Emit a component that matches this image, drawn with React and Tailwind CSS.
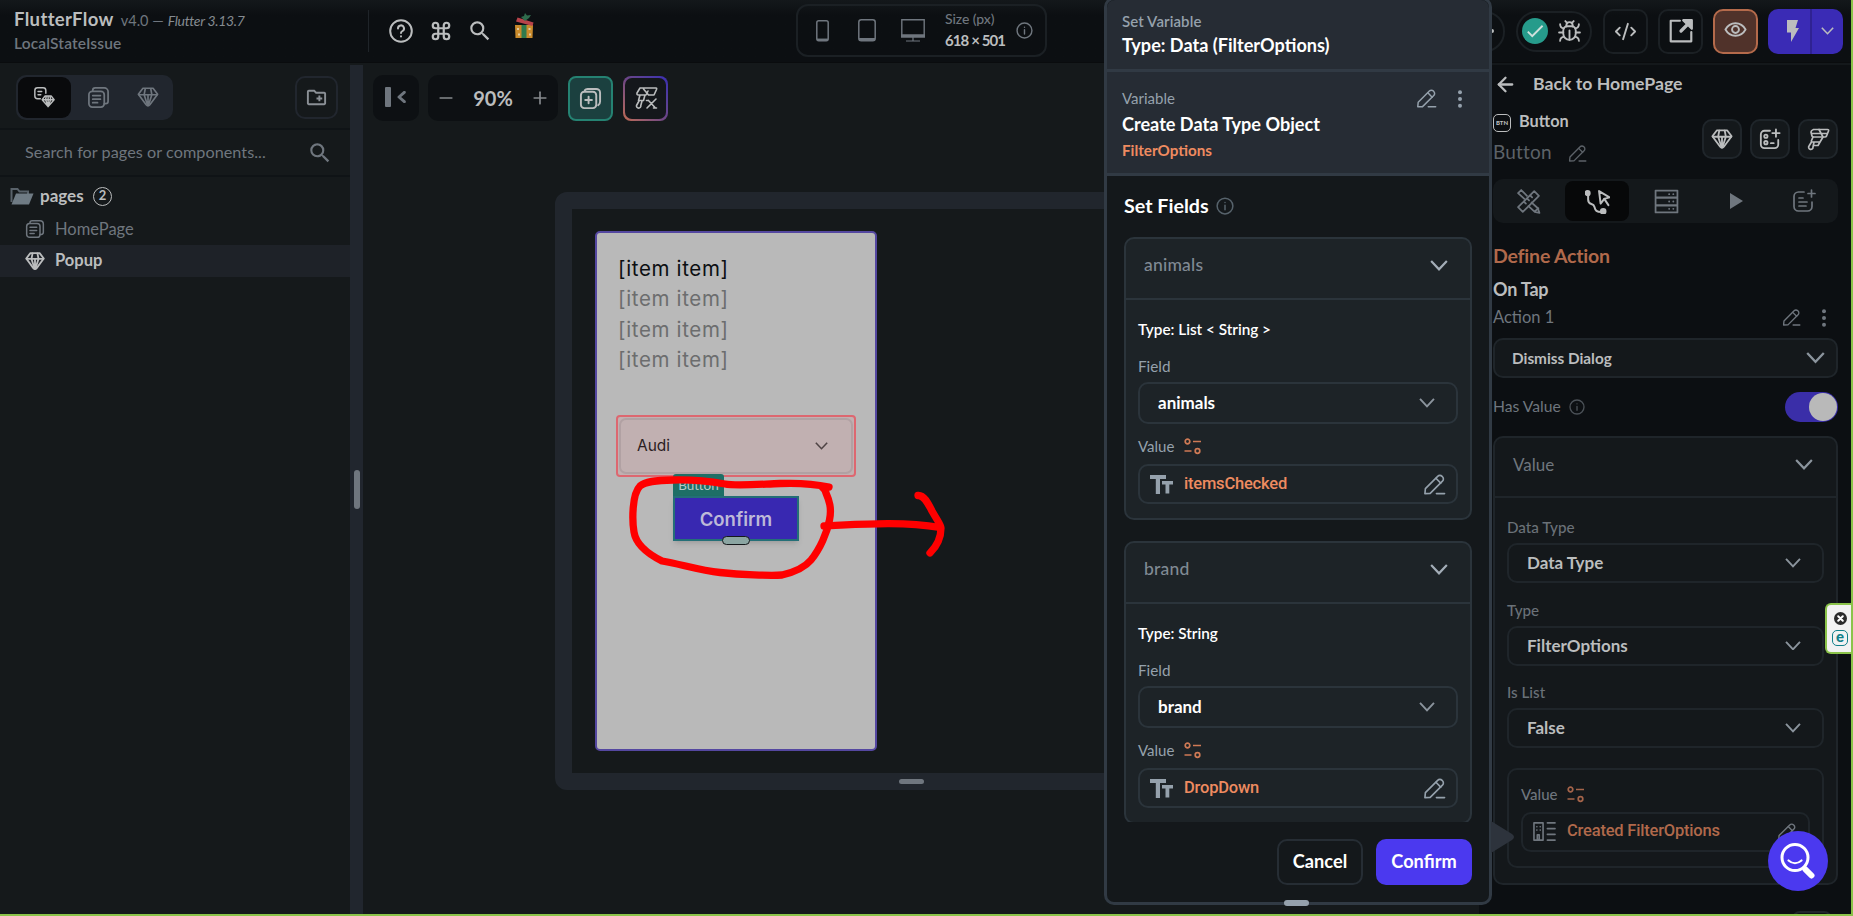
import React from "react";
import { Command, ArrowLeft, Plus, Minus, CodeXml, Bug } from "lucide-react";
import { MdOutlineCreateNewFolder, MdCheck, MdSearch } from "react-icons/md";

const Svg = ({ size = 24, className = "", children, sw = 1.8, box = 24 }) => (
  <svg
    width={size}
    height={size}
    viewBox={`0 0 ${box} ${box}`}
    fill="none"
    stroke="currentColor"
    strokeWidth={sw}
    strokeLinecap="round"
    strokeLinejoin="round"
    className={`shrink-0 ${className}`}
  >
    {children}
  </svg>
);

const Diamond = ({ size = 22, className, sw = 1.8 }) => (
  <Svg size={size} className={className} sw={sw}>
    <path d="M6.5 2.5h11L22.500 9 14 20.500q-2 2.500-4 0L1.500 9z" />
    <path d="M2 9.500h20M9 3L7.800 9.500 11.500 21M15 3l1.200 6.500L12.500 21M12 9.500V21" />
  </Svg>
);

const Pages = ({ size = 22, className }) => (
  <Svg size={size} className={className}>
    <rect x="2" y="5.5" width="16" height="16.5" rx="3.5" />
    <path d="M6 5V4.5A2.5 2.5 0 0 1 8.5 2H18a4 4 0 0 1 4 4v10a2.5 2.5 0 0 1-2.5 2.5H18" />
    <path d="M6 10h8M6 13.7h8M6 17.4h5" />
  </Svg>
);

const PagesDiamond = () => (
  <Svg size={22} sw={1.6}>
    <path d="M8 14H5a3 3 0 0 1-3-3V5a3 3 0 0 1 3-3h6a3 3 0 0 1 3 3v3" />
    <path d="M5.5 6h4M5.5 9.5h3" />
    <path d="M13 11h7l3 4-6.5 7.5L10 15zM10 15h13M14.5 11l-.8 4 2.8 7 2.8-7-.8-4M16.5 11v11" />
  </Svg>
);

const Pencil = ({ size = 22, className }) => (
  <Svg size={size} className={className} sw={1.7}>
    <path d="M2 21.500l.5-5.200L15.300 3.500a3.200 3.200 0 0 1 4.600 0l.4.400a3.200 3.200 0 0 1 0 4.600L7.500 21.300z" />
    <path d="M13.500 5.500l5 5M14 21.500H22.500" />
  </Svg>
);

const Info = ({ size = 18, className }) => (
  <Svg size={size} className={className} sw={2}>
    <circle cx="12" cy="12" r="10.5" />
    <path d="M12 11v6M12 7.2v.1" />
  </Svg>
);

const Dots = ({ className = "" }) => (
  <svg width="6" height="18" viewBox="0 0 6 18" fill="currentColor" className={`shrink-0 ${className}`}>
    <circle cx="3" cy="2.3" r="2" />
    <circle cx="3" cy="9" r="2" />
    <circle cx="3" cy="15.7" r="2" />
  </svg>
);

const Chevron = ({ w = 18, className = "" }) => (
  <svg
    width={w}
    height={w * 0.6}
    viewBox="0 0 18 11"
    fill="none"
    stroke="currentColor"
    strokeWidth="2.2"
    className={`shrink-0 ${className}`}
  >
    <path d="M1 1l8 8.5L17 1" />
  </svg>
);

const Sliders = ({ className }) => (
  <svg width="18" height="17" viewBox="0 0 18 17" fill="none" stroke="currentColor" strokeWidth="1.7" className={className}>
    <circle cx="3.5" cy="3.5" r="2.3" />
    <path d="M9 3.5h8M.5 13h7" />
    <circle cx="13.5" cy="13" r="2.3" />
  </svg>
);

const TextType = () => (
  <svg width="23" height="19" viewBox="0 0 23 19" fill="currentColor" className="text-[#95a1ac] shrink-0">
    <path d="M0 0h16v4H10v15H5.8V4H0z" />
    <path d="M12 6h11v3.6h-3.7V18.5h-3.8V9.6H12z" />
  </svg>
);

const Roller = ({ size = 24 }) => (
  <Svg size={size} sw={1.7}>
    <path d="M7.500 2.500h14q1.500 0 1 1.500l-2 5q-.5 1-1.500 1H7.500q-1 0-1.500-1L5 5q0-1.500 2.500-2.500z" />
    <path d="M13 2.500l4 7.500-3 5H6.500q-1.500 0-1-1.500L7 10M6 6.500h15M5.500 15l-2.500 4a2.200 2.200 0 1 0 4 1l1-5M8 18.500h4l2-3.500" />
  </Svg>
);

const Gift = () => (
  <svg width="22" height="27" viewBox="0 0 22 27" className="shrink-0">
    <path d="M2 12h18l-.5 13H2.500z" fill="#c98a2b" />
    <path d="M8.500 12h5v13h-5z" fill="#2f7a4c" />
    <path d="M4.500 4.500l16 5-1 3.500L3 8.500z" fill="#b8434a" />
    <path d="M12 8L8 4l3-1 1-3 2 2.500 4-.5-2 3z" fill="#2f6b4c" />
    <path d="M4 15h2v2H4zM5 20.500h2v2H5zM15.500 15h2v2h-2zM16 20.500h2v2h-2z" fill="#e0c9a0" />
  </svg>
);

const IconBox = ({ className = "", children }) => (
  <div className={`flex items-center justify-center shrink-0 ${className}`}>{children}</div>
);

const Header = () => (
  <header className="flex h-[63px] shrink-0 bg-gradient-to-b from-[#14181b] via-[#0c0f12] via-25% to-[#0c0f12] border-b border-[#0a0c0e]">
    <div className="w-[369px] shrink-0 pl-[14px] pt-[7px]">
      <div className="flex items-baseline h-[24px] leading-[24px] whitespace-nowrap text-[#6f767e]">
        <span className="text-[18.5px] font-bold text-[#bbbdbe] tracking-[0.35px]">FlutterFlow</span>
        <span className="text-[14.5px] ml-[7px]">v4.0 —</span>
        <span className="text-[14px] italic ml-[4px] tracking-[-0.3px] text-[#858b91]">Flutter 3.13.7</span>
      </div>
      <div className="text-[15.5px] font-semibold leading-[24px] tracking-[0.15px] text-[#6f767e]">LocalStateIssue</div>
    </div>
    <div className="w-px h-[42px] mt-[10px] -ml-px bg-[#1f2429]" />
    <div className="flex items-center h-[62px] pl-[20px] w-[427px] shrink-0 text-[#bbbdbe]">
      <Svg size={24} sw={2}>
        <circle cx="12" cy="12" r="10.8" />
        <path d="M9 9.500a3 3 0 1 1 4.500 2.500c-1 .6-1.500 1-1.500 2M12 17.300v.1" />
      </Svg>
      <Command size={22} strokeWidth={2.4} className="ml-[17px]" />
      <MdSearch size={26} className="ml-[15px]" />
      <div className="ml-[20px] -mt-[9px]"><Gift /></div>
    </div>
    <div className="flex items-center w-[251px] h-[53px] mt-[4px] shrink-0 rounded-[12px] border-2 border-[#1b2024] pl-[18px] text-[#6f767e]">
      <svg width="13" height="22" viewBox="0 0 13 22" fill="none" stroke="currentColor" strokeWidth="1.5">
        <rect x=".8" y=".8" width="11.4" height="20" rx="2" />
        <path d="M1 19.8h11" strokeWidth="2.5" />
      </svg>
      <svg width="18" height="23" viewBox="0 0 18 23" fill="none" stroke="currentColor" strokeWidth="1.5" className="ml-[29px]">
        <rect x=".8" y=".8" width="16.4" height="21" rx="2.5" />
        <path d="M1 20.5h16" strokeWidth="3" />
      </svg>
      <svg width="24" height="23" viewBox="0 0 24 23" fill="none" stroke="currentColor" strokeWidth="1.4" className="ml-[25px]">
        <path d="M.8 16V.8h22.400V16" />
        <path d="M0 17h24" strokeWidth="3.5" />
        <path d="M12 18v3.500M5 22h14" strokeWidth="1.2" />
      </svg>
      <div className="ml-[20px] w-[64px] whitespace-nowrap">
        <div className="text-[14px] leading-[20px] font-medium tracking-[-0.1px]">Size (px)</div>
        <div className="text-[15px] leading-[23px] font-bold tracking-[-0.9px] text-[#bbbdbe]">618 × 501</div>
      </div>
      <Info size={17} className="ml-[7px]" />
    </div>
    <div className="flex ml-auto h-[62px] items-center text-[#bbbdbe] pr-[8px] shrink-0">
      <div className="w-[40px] h-[41px] rounded-full border-2 border-[#1b2024] flex items-center justify-end pr-[9px]">
        <span className="size-[4px] rounded-full bg-[#bbbdbe]" />
      </div>
      <div className="ml-[11px] w-[76px] h-[41px] rounded-full border-2 border-[#1b2024] flex items-center pl-[4px]">
        <IconBox className="size-[26px] rounded-full bg-[#269b8b] text-[#cfe0dc]"><MdCheck size={22} /></IconBox>
        <Bug size={25} strokeWidth={1.8} className="ml-[9px]" />
      </div>
      <IconBox className="ml-[11px] size-[45px] rounded-[10px] border-2 border-[#1b2024]"><CodeXml size={23} /></IconBox>
      <IconBox className="ml-[10px] size-[45px] rounded-[10px] border-2 border-[#1b2024]">
        <Svg size={26} sw={2}>
          <path d="M11 2.500H2.500v19h19V13" />
          <path d="M12 12l6-6" strokeWidth="3" />
          <path d="M14 2h8v8z" fill="currentColor" />
        </Svg>
      </IconBox>
      <IconBox className="ml-[10px] size-[45px] rounded-[10px] border-2 border-[#b46a4b] bg-[#50322a] pb-[3px]">
        <Svg size={23} sw={2}>
          <path d="M1.500 12C4 7.500 8 5.500 12 5.500S20 7.500 22.500 12C20 16.500 16 18.500 12 18.500S4 16.500 1.500 12z" />
          <circle cx="12" cy="12" r="3.6" />
        </Svg>
      </IconBox>
      <div className="ml-[10px] w-[75px] h-[45px] rounded-[10px] bg-[#3a2bb5] flex items-center">
        <IconBox className="w-[44px] h-full border-r-2 border-[#2f2292]">
          <svg width="14" height="22" viewBox="0 0 14 22" fill="currentColor" className="ml-[7px]">
            <path d="M1 0h11L9.500 8H13L5 22v-9.500H1z" />
          </svg>
        </IconBox>
        <IconBox className="w-[31px]"><Chevron w={13} /></IconBox>
      </div>
    </div>
  </header>
);

const Sidebar = () => (
  <aside className="flex flex-col w-[350px] shrink-0 text-[#6f767e]">
    <div className="flex items-center justify-between h-[67px] pl-[16px] pr-[12px] pt-[3px] border-b-2 border-[#0f1316]">
      <div className="flex items-center w-[157px] h-[45px] rounded-[10px] bg-[#21262e] p-[2px]">
        <IconBox className="w-[53px] h-[41px] rounded-[9px] bg-[#090a0c] text-[#bbbdbe] pr-[2px]"><PagesDiamond /></IconBox>
        <IconBox className="w-[54px]"><Pages size={23} /></IconBox>
        <IconBox className="w-[45px]"><Diamond size={22} /></IconBox>
      </div>
      <IconBox className="size-[43px] rounded-[10px] border-2 border-[#21262e] text-[#8b9096]">
        <MdOutlineCreateNewFolder size={23} />
      </IconBox>
    </div>
    <div className="flex items-center justify-between h-[47px] pl-[25px] pr-[17px] border-b-2 border-[#0f1316]">
      <span className="text-[16.2px] tracking-[0.05px] text-[#6f767e]">Search for pages or components...</span>
      <MdSearch size={26} />
    </div>
    <div className="flex items-center h-[38px] pl-[10px]">
      <svg width="24" height="18" viewBox="0 0 24 18" className="shrink-0">
        <path d="M1.500 15V2h6l2 2.500H18V7" fill="none" stroke="#59626a" strokeWidth="2" />
        <path d="M6 6.500h17.500L19 17.500H1.500z" fill="#6f7b84" />
      </svg>
      <span className="ml-[6px] w-[46px] text-[17px] font-bold text-[#bbbdbe]">pages</span>
      <IconBox className="ml-[7px] size-[19px] rounded-full border-[1.5px] border-[#bbbdbe] text-[13px] font-bold text-[#bbbdbe]">2</IconBox>
    </div>
    <div className="flex items-center h-[28px] mb-[2px] pl-[25px]">
      <Pages size={20} />
      <span className="ml-[10px] text-[16.500px]">HomePage</span>
    </div>
    <div className="flex items-center h-[32px] pl-[25px] pb-[1px] bg-[#1e2228] text-[#bbbdbe]">
      <Diamond size={20} sw={2.200} />
      <span className="ml-[10px] text-[16.500px] font-bold">Popup</span>
    </div>
  </aside>
);

const Scribble = () => (
  <svg
    width="340"
    height="120"
    viewBox="620 466 340 120"
    fill="none"
    stroke="#ff0000"
    strokeWidth="7.3"
    strokeLinecap="round"
    strokeLinejoin="round"
    className="absolute left-[257px] top-[403px]"
  >
    <path d="M829 487C815 484 800 482.700 780 483.500C755 484.500 735 486 725 484C705 480.500 690 479.500 673 480C655 480.300 645 481.500 640 486C632 494 632 520 634 532C636 545 650 555 662 561C680 564 700 570.500 720 572.500C740 574.500 770 576 782 575C795 572 806 566 811 560C820 549 827 533 829.500 520C832 508 829 500 826 493C825 489 822 487 821 486" />
    <path d="M824 526C860 524.500 900 521 940 527.500M918 495.500C924 495 928 503 932 511C937 520 941 525 941 528C941 538 936 547 930 553" />
  </svg>
);

const Canvas = () => (
  <main className="relative flex-1 min-w-0 overflow-hidden pl-[10px] pt-[12px]">
    <div className="flex items-center text-[#bbbdbe]">
      <IconBox className="size-[46px] rounded-[10px] bg-[#0d1013]">
        <span className="w-[6px] h-[20px] rounded-[1px] bg-[#6f767e] mr-[4px] -mt-[3px]" />
        <Svg size={12} box={9} sw={2.200} className="text-[#6f767e] -mt-[3px]"><path d="M7 1L3 4.500 7 8" /></Svg>
      </IconBox>
      <div className="ml-[9px] w-[130px] h-[46px] rounded-[10px] bg-[#0d1013] flex items-center justify-between px-[8px] pb-[1px]">
        <Minus size={20} className="text-[#85898d]" />
        <span className="text-[20px] font-bold">90%</span>
        <Plus size={20} className="text-[#85898d]" />
      </div>
      <IconBox className="ml-[10px] size-[45px] rounded-[8px] border-2 border-[#258272] bg-[#1b403f]">
        <Svg size={23} sw={2}>
          <rect x="2" y="5" width="16" height="17" rx="3.5" />
          <path d="M6 3.500C7 2 8 2 9 2h9a4 4 0 0 1 4 4v9c0 2-.5 3-2 4M10 10v7M6.500 13.500h7" />
        </Svg>
      </IconBox>
      <div className="ml-[10px] size-[45px] rounded-[8px] p-[2px] bg-gradient-to-tr from-[#c06a50] via-[#6c4585] to-[#3a2bb5]">
        <IconBox className="size-full rounded-[7px] bg-[#14171b]">
          <Svg size={24} sw={1.600}>
            <path d="M3 7L6 2h16q1 0 .5 1.500L20 9h-5.500L9.500 3M3 7q-.5 2 1.500 2H12l2-4M6 9l-1.500 5.500h5L11 9M5 15l-2.500 4.500a2.200 2.200 0 1 0 4.300 0L8 15" />
            <path d="M13 22l9-9M14.500 14.500l6.500 7M12.500 14.500h2M19.500 22h3" />
          </Svg>
        </IconBox>
      </div>
    </div>

    {/* device frame */}
    <div className="absolute left-[192px] top-[129px] w-[1000px] h-[598px] rounded-[12px] border-[17px] border-[#21262d] bg-[#15191b]">
      <div className="absolute left-[23px] top-[22px] w-[282px] h-[520px] rounded-[5px] border-2 border-[#5447a0] bg-[#b9b9b9] font-['Inter',sans-serif]">
        <div className="pl-[21px] pt-[21px] text-[20.5px] tracking-[0.65px] leading-[30.300px] text-[#6c6d6e]">
          <div className="text-[#0c0f12]">[item item]</div>
          <div>[item item]</div>
          <div>[item item]</div>
          <div>[item item]</div>
        </div>
        <div className="mt-[39.500px] ml-[19px] w-[240px] h-[62px] rounded-[4px] border-2 border-[#dd6770] bg-[#c1b0b1] p-px">
          <div className="flex items-center justify-between w-full h-full rounded-[7px] border-2 border-[#b1a1a3] pl-[16px] pr-[23px] text-[#2b1d1f]">
            <span className="text-[15.5px]">Audi</span>
            <Chevron w={13} className="text-[#4f4445]" />
          </div>
        </div>
        <div className="absolute left-[76px] top-[241px] w-[51px] h-[24px] rounded-t-[3px] bg-[#1e6f66] text-[#b5cbc8] text-[13.5px] leading-[23px] text-center font-['Lato',sans-serif]">
          Button
        </div>
        <div className="absolute left-[76px] top-[263px] w-[126px] h-[45px] border-2 border-[#246f77] bg-[#3828b1] text-center text-[18.5px] leading-[42px] font-semibold text-[#bdb9d8] shadow-md">
          Confirm
          <span className="absolute left-[47px] top-[38px] w-[28px] h-[9px] rounded-full border border-[#14181b] bg-[#8ba5a2]" />
        </div>
      </div>
      <span className="absolute left-[327px] top-[570px] w-[25px] h-[5px] rounded-full bg-[#6f767e]" />
    </div>
    <Scribble />
  </main>
);

const Select = ({ label, height = "h-[40px]", className = "border-[#1f252a] text-[#bbbdbe]" }) => (
  <div className={`flex items-center justify-between ${height} rounded-[10px] border-2 pl-[18px] pr-[21px] text-[17px] font-bold ${className}`}>
    {label}
    <Chevron w={16} className="text-[#8b949d]" />
  </div>
);

const PanelField = ({ label, value }) => (
  <div className="h-[82.5px]">
    <div className="h-[27px] leading-[22px] text-[15.2px] font-medium text-[#6a7178]">{label}</div>
    <Select label={value} />
  </div>
);

const Properties = () => (
  <aside className="w-[372px] shrink-0 bg-[#0c0f12] pl-[14px] pr-[13px] text-[#6f767e] border-t-2 border-[#14181b]">
    <div className="flex items-center h-[38px] pl-[3px] text-[#bbbdbe]">
      <ArrowLeft size={23} strokeWidth={2.4} className="-ml-[2px]" />
      <span className="ml-[16px] text-[17.7px] font-bold">Back to HomePage</span>
    </div>
    <div className="flex items-center justify-between h-[76px] pb-[4px]">
      <div className="pb-[3px]">
        <div className="flex items-center h-[30px] text-[#bbbdbe]">
          <IconBox className="size-[18px] rounded-[5px] border-[1.5px] border-[#bbbdbe] text-[6px] font-black mt-[2px]">BTN</IconBox>
          <span className="ml-[8px] text-[16.300px] font-bold">Button</span>
        </div>
        <div className="flex items-center h-[32px] text-[#5c6268]">
          <span className="text-[19px] tracking-[0.2px]">Button</span>
          <Pencil size={19} className="ml-[16px] mt-[2px]" />
        </div>
      </div>
      <div className="flex gap-[8px] text-[#bbbdbe]">
        <IconBox className="size-[40px] rounded-[10px] border-2 border-[#1f252a] bg-[#14181b]"><Diamond sw={2} /></IconBox>
        <IconBox className="size-[40px] rounded-[10px] border-2 border-[#1f252a] bg-[#14181b]">
          <Svg size={22} sw={2}>
            <path d="M12 3H6a4 4 0 0 0-4 4v11a4 4 0 0 0 4 4h11a4 4 0 0 0 4-4v-5M18.500 1.500v8M14.500 5.500h8" />
            <circle cx="7.5" cy="9" r="1.8" />
            <circle cx="7.5" cy="16" r="1.8" />
            <path d="M13 16.500h3" />
          </Svg>
        </IconBox>
        <IconBox className="size-[40px] rounded-[10px] border-2 border-[#1f252a] bg-[#14181b]"><Roller /></IconBox>
      </div>
    </div>
    <div className="flex items-center h-[44px] rounded-[10px] bg-[#14181b] px-[3px]">
      <IconBox className="w-[69px] pr-[5px]">
        <Svg size={25} sw={1.700}>
          <path d="M2 17.500L17.500 2 22 6.500 6.500 22zM13.500 6l2 2M10.500 9l2 2M7.500 12l2 2" />
          <path d="M8 9.500L2 4l3-3 5.500 5.500M15 13l6 5.500 1.500 4.500-4.500-1L12 16.500M18 21.500l3.500-3" />
        </Svg>
      </IconBox>
      <IconBox className="w-[64px] h-[40px] rounded-[8px] bg-[#070809] text-[#bbbdbe]">
        <Svg size={25} sw={1.900}>
          <circle cx="2.5" cy="4" r="2" fill="currentColor" />
          <path d="M3 6v4c0 6 5 3 6 7s2 5 7 5M13.500 2l10 6-5 1.500L15 14z" />
          <path d="M18.500 9.500l4 6" />
          <circle cx="17.500" cy="21.500" r="2.200" fill="currentColor" />
        </Svg>
      </IconBox>
      <IconBox className="w-[74px]">
        <Svg size={25} sw={1.700}>
          <path d="M1.500 1.500h21v6.500h-21zM1.500 8.500h21v7h-21zM1.500 16h21v6.500h-21zM14.500 5h.1M18.500 5h.1M14.500 12h.1M18.500 12h.1M14.500 19h.1M18.500 19h.1" />
        </Svg>
      </IconBox>
      <IconBox className="w-[66px]">
        <svg width="13" height="16" viewBox="0 0 13 16" fill="currentColor"><path d="M0 0l13 8-13 8z" /></svg>
      </IconBox>
      <IconBox className="w-[69px]">
        <Svg size={24} sw={1.700}>
          <path d="M12 3H6.500A4.500 4.500 0 0 0 2 7.500v10A4.500 4.500 0 0 0 6.500 22h9a4.500 4.500 0 0 0 4.500-4.500V13M19.500 1v7M16 4.500h7M7 9h4M7 13h8M7 17h7" />
        </Svg>
      </IconBox>
    </div>

    <div className="mt-[21px] h-[24px] leading-[24px] text-[19.5px] font-bold tracking-[-0.2px] text-[#b0694b]">Define Action</div>
    <div className="mt-[8px] h-[26px] leading-[26px] text-[18px] font-bold tracking-[-0.2px] text-[#bbbdbe]">On Tap</div>
    <div className="flex items-center justify-between h-[31px] pr-[11px]">
      <span className="text-[16.5px]">Action 1</span>
      <div className="flex items-center text-[#6f767e]">
        <Pencil size={19} className="mr-[20px]" />
        <Dots />
      </div>
    </div>
    <div className="flex items-center justify-between h-[40px] mt-[5px] rounded-[10px] border-2 border-[#1f252a] bg-[#14181b] pl-[17px] pr-[11px] text-[15.3px] font-bold text-[#bbbdbe]">
      Dismiss Dialog
      <Chevron w={19} className="text-[#8b949d]" />
    </div>
    <div className="flex items-center h-[30px] mt-[14px]">
      <span className="text-[15.7px]">Has Value</span>
      <Info size={16} className="ml-[8px] text-[#4b5157]" />
      <div className="ml-auto flex justify-end w-[53px] h-[30px] rounded-full bg-[#3a2ea8] p-px">
        <span className="size-[28px] rounded-full bg-[#b9b9b9]" />
      </div>
    </div>

    <div className="mt-[14px] h-[449px] rounded-[10px] border-2 border-[#1f252a] bg-[#14181b]">
      <div className="flex items-center justify-between h-[60px] pb-[5px] border-b-2 border-[#1f252a] pl-[18px] pr-[23px]">
        <span className="text-[17px]">Value</span>
        <Chevron w={18} className="text-[#8b949d]" />
      </div>
      <div className="px-[12px] pt-[18px]">
        <PanelField label="Data Type" value="Data Type" />
        <PanelField label="Type" value="FilterOptions" />
        <PanelField label="Is List" value="False" />
        <div className="mt-[4px] h-[100px] rounded-[10px] border-2 border-[#1f252a] px-[12px]">
          <div className="flex items-center h-[42px] pt-[8px]">
            <span className="text-[15px] w-[46px] font-medium">Value</span>
            <Sliders className="text-[#a5644a]" />
          </div>
          <div className="flex items-center h-[40px] rounded-[10px] border-2 border-[#1f252a] pl-[10px] pr-[11px]">
            <Svg size={23} sw={1.700} className="text-[#6f767e]">
              <path d="M1 3h9.500v18H1zM15 3h8M15 9h8M15 15h8M15 21h8M4 7h.1M7.500 7h.1M4 10.500h.1M7.500 10.500h.1M4.500 15.500v5h2v-5z" />
            </Svg>
            <span className="ml-[11px] mr-auto text-[16.5px] font-medium text-[#b0694b] font-['Roboto',sans-serif] tracking-[-0.2px]">Created FilterOptions</span>
            <Pencil size={20} />
          </div>
        </div>
      </div>
    </div>
    <div className="ml-auto mr-[6px] mt-[26px] w-[40px] h-[20px] rounded-[8px] border-2 border-[#1f252a]" />
  </aside>
);

const FieldCard = ({ name, type, value }) => (
  <div className="h-[283px] mb-[21px] shrink-0 rounded-[10px] border-2 border-[#2b343b] bg-[#1d2327]">
    <div className="flex items-center justify-between h-[61px] pb-[6px] border-b-2 border-[#2b343b] pl-[18px] pr-[22px]">
      <span className="text-[17.5px] font-medium tracking-[0.2px] text-[#808a94]">{name}</span>
      <Chevron w={18} className="text-[#a3adb7]" />
    </div>
    <div className="px-[12px]">
      <div className="mt-[18px] h-[22px] leading-[22px] text-[15.3px] font-semibold text-white">{type}</div>
      <div className="mt-[15px] h-[27px] leading-[22px] text-[15.3px] text-[#95a1ac]">Field</div>
      <Select label={name} height="h-[42px]" className="border-[#2b343b] text-white" />
      <div className="flex items-center h-[40px] pt-[5px]">
        <span className="text-[15px] w-[46px] text-[#95a1ac]">Value</span>
        <Sliders className="text-[#cf7a55]" />
      </div>
      <div className="flex items-center h-[40px] rounded-[10px] border-2 border-[#2b343b] pl-[10px] pr-[10px]">
        <TextType />
        <span className="ml-[11px] mr-auto text-[16.5px] font-medium tracking-[-0.2px] text-[#ee8b60] font-['Roboto',sans-serif]">{value}</span>
        <Pencil size={23} className="text-[#95a1ac]" />
      </div>
    </div>
  </div>
);

const VariableDialog = () => (
  <div className="absolute left-[1104px] -top-[3px] w-[388px] h-[908px] rounded-[10px] border-3 border-[#313a44] bg-[#14181b] flex flex-col">
    <div className="h-[72px] shrink-0 border-b-3 border-[#313a44] bg-[#262c34] pl-[15px] pt-[10px] rounded-t-[8px]">
      <div className="h-[23px] leading-[23px] text-[15px] font-semibold tracking-[0.1px] text-[#95a1ac]">Set Variable</div>
      <div className="h-[24px] leading-[24px] text-[18.1px] font-bold text-white">Type: Data (FilterOptions)</div>
    </div>
    <div className="relative h-[104px] shrink-0 border-b-3 border-[#313a44] bg-[#262c34] pl-[15px] pt-[14px]">
      <div className="h-[25px] leading-[25px] text-[15px] text-[#95a1ac]">Variable</div>
      <div className="h-[27px] leading-[27px] text-[18.1px] font-bold text-white">Create Data Type Object</div>
      <div className="h-[24px] leading-[24px] text-[15.2px] font-bold text-[#ee8b60]">FilterOptions</div>
      <div className="absolute right-[26px] top-[16px] flex items-center gap-[20px] text-[#95a1ac]">
        <Pencil size={21} />
        <Dots />
      </div>
    </div>
    <div className="flex items-center h-[61px] shrink-0 pl-[17px] pb-[2px]">
      <span className="text-[19.7px] font-bold text-white">Set Fields</span>
      <Info size={18} className="ml-[7px] text-[#57636c]" />
    </div>
    <div className="flex flex-col h-[585px] px-[17px] overflow-hidden">
      <FieldCard name="animals" type="Type: List < String >" value="itemsChecked" />
      <FieldCard name="brand" type="Type: String" value="DropDown" />
    </div>
    <div className="flex justify-end gap-[13px] pt-[17px] pr-[17px] text-[18.2px] font-bold text-white">
      <button className="w-[86px] h-[46px] rounded-[10px] border-2 border-[#262d34]">Cancel</button>
      <button className="w-[96px] h-[46px] rounded-[10px] bg-[#4b39ef]">Confirm</button>
    </div>
    <span className="absolute left-[177px] bottom-[-4px] w-[25px] h-[6px] rounded-[3px] bg-[#95a1ac]" />
    <svg width="24" height="32" viewBox="0 0 24 32" className="absolute -right-[26px] top-[821px]">
      <path d="M0 0l21 13q4 3 0 6L0 32z" fill="#2d333c" />
    </svg>
  </div>
);

const App = () => {
  return (
    <div className="relative w-[1853px] h-[916px] overflow-hidden flex flex-col bg-[#15191b] border-r-2 border-b-2 border-[#8bc34a] font-['Lato',sans-serif]">
      <Header />
      <div className="flex flex-1 min-h-0">
        <Sidebar />
        <div className="w-[13px] mt-[2px] shrink-0 bg-[#21262e] flex items-center justify-center">
          <span className="w-[6px] h-[39px] rounded-full bg-[#6f767e]" />
        </div>
        <Canvas />
        <Properties />
      </div>

      <VariableDialog />

      <div className="absolute left-[1768px] top-[831px] size-[60px] rounded-full bg-[#4b39ef] flex items-center justify-center text-white">
        <Svg size={36} box={36} sw={3}>
          <circle cx="15" cy="14.5" r="13" />
          <path d="M8.500 17.500c4 3.500 9 3.500 13 0" strokeWidth="2.2" />
          <path d="M25.500 26.500l6 6" strokeWidth="6" />
        </Svg>
      </div>
      <div className="absolute left-[1825px] top-[603px] w-[28px] h-[51px] rounded-l-[6px] border-2 border-r-0 border-[#8bc34a] bg-[#f2f2f2] flex flex-col items-center justify-center gap-[5px]">
        <Svg size={13} box={13} sw={2}>
          <circle cx="6.5" cy="6.5" r="6.5" fill="#2b2b2b" stroke="none" />
          <path d="M4.200 4.200l4.600 4.600M8.800 4.200L4.200 8.800" stroke="#fff" />
        </Svg>
        <span className="size-[16px] rounded-[5px] border-[1.5px] border-[#12808a] text-[#12808a] text-[15px] leading-[11px] font-black text-center">e</span>
      </div>
    </div>
  );
};

export default App;
